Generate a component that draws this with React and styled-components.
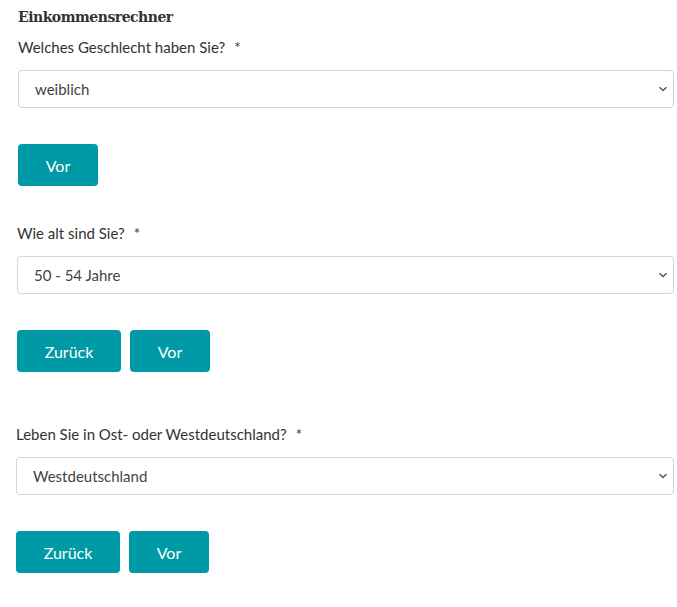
import styled, { createGlobalStyle } from "styled-components";

const GlobalStyle = createGlobalStyle`
  body {
    margin: 0;
    background: #fff;
    font-family: Lato, "Liberation Sans", sans-serif;
  }
`;

const Page = styled.div`
  padding: 7px 3px 20px 18px;
`;

const Title = styled.h2`
  margin: 0;
  font-family: "DejaVu Serif", "Liberation Serif", serif;
  font-size: 14px;
  letter-spacing: -0.5px;
  line-height: 20px;
  font-weight: bold;
  color: #333;
`;

const Step = styled.div`
  margin-left: ${(props) => props.$shift}px;
  margin-top: ${(props) => props.$top}px;
`;

const Label = styled.label`
  display: block;
  font-size: 15px;
  line-height: 20px;
  color: #333;
  margin-bottom: 13px;
`;

const Required = styled.span`
  margin-left: 9px;
`;

const SelectWrap = styled.div`
  position: relative;
`;

const Select = styled.select`
  display: block;
  width: 100%;
  height: 38px;
  padding: 0 16px;
  border: 1px solid #ced4da;
  border-radius: 4px;
  background: #fff;
  color: #444;
  font-family: Lato, "Liberation Sans", sans-serif;
  font-size: 15px;
  appearance: none;
`;

const Chevron = styled.svg`
  position: absolute;
  right: 6px;
  top: 16px;
  pointer-events: none;
`;

const ButtonRow = styled.div`
  display: flex;
  gap: 9px;
  margin-top: 36px;
`;

const Button = styled.button`
  width: ${(props) => (props.$wide ? 104 : 80)}px;
  height: 42px;
  border: none;
  border-radius: 4px;
  background: #009aa6;
  color: #fff;
  font-family: Lato, "Liberation Sans", sans-serif;
  font-size: 16px;
  cursor: pointer;
`;

const steps = [
  {
    question: "Welches Geschlecht haben Sie?",
    options: ["weiblich", "männlich", "divers"],
    back: false,
    shift: 0,
    top: 10,
  },
  {
    question: "Wie alt sind Sie?",
    options: ["45 - 49 Jahre", "50 - 54 Jahre", "55 - 59 Jahre"],
    value: "50 - 54 Jahre",
    back: true,
    shift: -1,
    top: 37,
  },
  {
    question: "Leben Sie in Ost- oder Westdeutschland?",
    options: ["Ostdeutschland", "Westdeutschland"],
    value: "Westdeutschland",
    back: true,
    shift: -2,
    top: 52,
  },
];

function App() {
  return (
    <Page>
      <GlobalStyle />
      <Title>Einkommensrechner</Title>
      {steps.map((step) => (
        <Step key={step.question} $shift={step.shift} $top={step.top}>
          <Label>
            {step.question}
            <Required>*</Required>
          </Label>
          <SelectWrap>
            <Select defaultValue={step.value || step.options[0]}>
              {step.options.map((option) => (
                <option key={option}>{option}</option>
              ))}
            </Select>
            <Chevron width="10" height="6" viewBox="0 0 10 6">
              <path
                d="M1.5 1.2 L5 4.6 L8.5 1.2"
                fill="none"
                stroke="#555"
                strokeWidth="1.4"
              />
            </Chevron>
          </SelectWrap>
          <ButtonRow>
            {step.back && <Button $wide>Zurück</Button>}
            <Button>Vor</Button>
          </ButtonRow>
        </Step>
      ))}
    </Page>
  );
}

export default App;
